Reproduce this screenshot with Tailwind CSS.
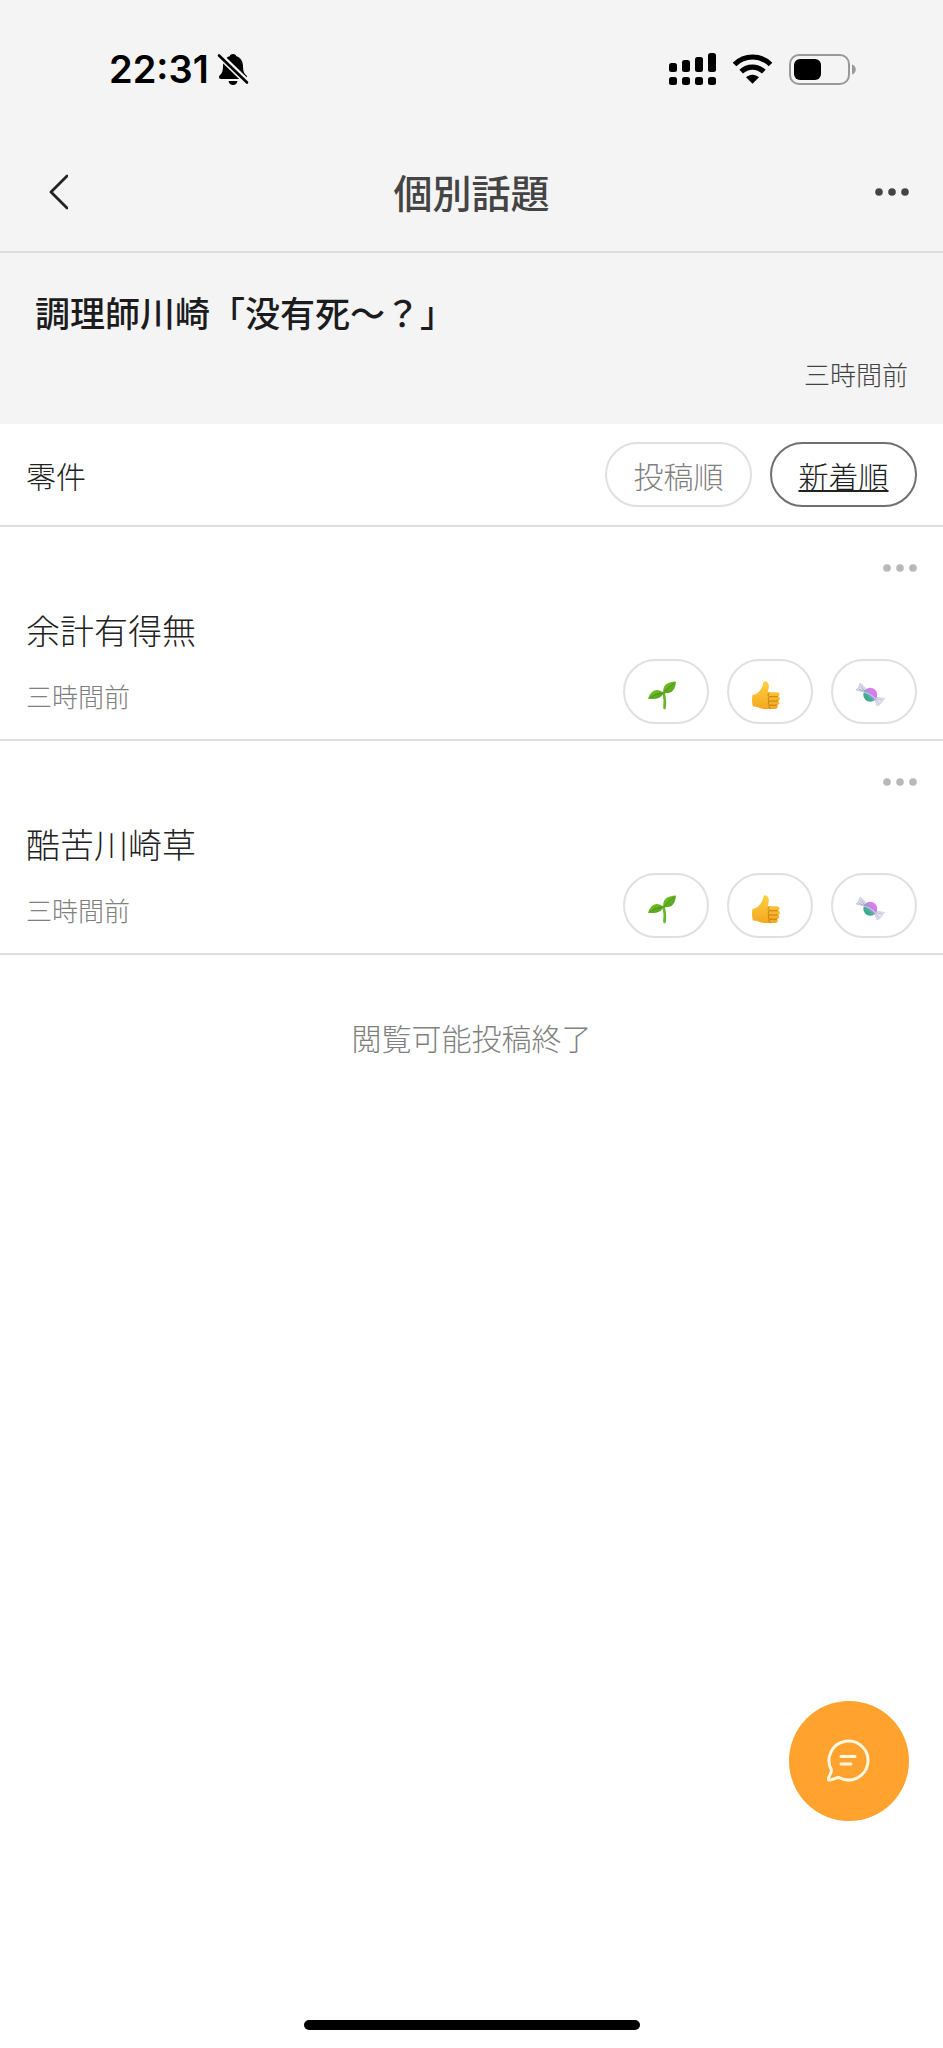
<!DOCTYPE html>
<html lang="ja">
<head>
<meta charset="utf-8">
<meta name="viewport" content="width=device-width, initial-scale=1">
<title>個別話題</title>
<script src="https://cdn.jsdelivr.net/npm/@tailwindcss/browser@4"></script>
</head>
<body class="relative flex min-h-screen flex-col bg-white font-['Noto_Sans_CJK_JP',sans-serif] font-light text-[#222]">
<svg class="absolute size-0" aria-hidden="true">
  <defs>
    <linearGradient id="leaf" x1="0" y1="0" x2="1" y2="1"><stop offset="0" stop-color="#7fc62b"/><stop offset="1" stop-color="#4c9a1c"/></linearGradient>
    <linearGradient id="hand" x1="0" y1="0" x2="0" y2="1"><stop offset="0" stop-color="#ffd043"/><stop offset="1" stop-color="#f3a81f"/></linearGradient>
    <linearGradient id="ball" x1="1" y1="0" x2="0" y2="1"><stop offset="0.2" stop-color="#e27cf0"/><stop offset="0.5" stop-color="#b48bdc"/><stop offset="0.62" stop-color="#46b29a"/><stop offset="1" stop-color="#2a9a78"/></linearGradient>
    <symbol id="seedling" viewBox="0 0 30 30">
      <path d="M16.500 12.500C18 18 18.500 22 17.500 28" fill="none" stroke="#6bb52a" stroke-width="2.600" stroke-linecap="round"/>
      <path d="M16.500 13C15 5 20 2 29 1.500C28.500 9.500 24.500 14.500 16.500 13Z" fill="url(#leaf)"/>
      <path d="M16.500 13C11 8 4 9 1 19C9 19.500 14 18.500 16.500 13Z" fill="url(#leaf)"/>
      <path d="M17 12.500C20 9 23 6 27 3.500M16 13.500C12 13 7 15 3 18" fill="none" stroke="#3f8a18" stroke-width=".8"/>
    </symbol>
    <symbol id="thumb" viewBox="0 0 30 30">
      <path d="M1.500 15C5 14.500 8 12.500 10 9C11.500 6.500 12 4.500 12.500 2.500C13 .5 16.500 .8 17.500 4C18.300 7 17.500 9.500 16.800 12.200H26C29 12.200 29.300 16 27 16.600C29.500 17.200 29.300 20.600 27 21C29 21.800 28.500 24.800 26.300 25.200C27.300 26.500 26.500 29 24 29H14C9 29 6.500 26.500 2 26.500C.8 23 .8 18 1.500 15Z" fill="url(#hand)"/>
      <path d="M26.800 16.700H18.500M26.800 21H18.300M26 25.200H18.500M18.500 12.600C16.500 13.500 16.800 16 18.500 16.700C16.800 17.800 16.800 20 18.300 21C17 22 17 24.300 18.500 25.200C17.500 26.500 18 28.500 19.500 28.800" fill="none" stroke="#c87a12" stroke-width="1"/>
    </symbol>
    <symbol id="candy" viewBox="0 0 30 30">
      <path d="M10 12L1 10L3.500 7.500L5 3.500L8 5.500L11.500 10Z" fill="#d9dbea" stroke="#b5b7cc" stroke-width=".6"/>
      <path d="M4 9.500L10 11.500M6 6.500L10 11" stroke="#9fa1bb" stroke-width=".8"/>
      <path d="M19.500 19.500L22 26L25 24.500L26.500 22.500L29.500 18.500L21 17Z" fill="#e4e2f0" stroke="#c5c3d8" stroke-width=".6"/>
      <path d="M20.500 18.500L27 20M20.500 18.500L24 24" stroke="#bbb6d0" stroke-width=".8"/>
      <circle cx="15.300" cy="14.700" r="7" fill="url(#ball)"/>
      <path d="M9 12C13 13 17 15 20.500 19" fill="none" stroke="#c9c5ee" stroke-width="1.200"/>
    </symbol>
    <symbol id="dots" viewBox="0 0 34 8">
      <circle cx="4" cy="4" r="3.800"/><circle cx="17" cy="4" r="3.800"/><circle cx="30" cy="4" r="3.800"/>
    </symbol>
  </defs>
</svg>

<div class="flex h-[138px] items-center justify-between bg-[#f4f4f4] pr-[86px] pl-[109px] font-['Inter',sans-serif]">
  <div class="flex items-center gap-2">
    <time class="text-[38px] leading-none font-semibold text-black">22:31</time>
    <svg class="h-8 w-8" viewBox="0 0 32 32" role="img" aria-label="消音">
      <path d="M16 1C17.800 1 19 2 19.300 3.200C24 4.500 26 8.500 26 13.500C26 18 27 20.500 29.500 22.500C30.500 24 30 26 28 26H4C2 26 1.500 24 2.500 22.500C5 20.500 6 18 6 13.500C6 8.500 8 4.500 12.700 3.200C13 2 14.200 1 16 1Z"/>
      <path d="M11.500 28H20.500C20 30.500 18.500 32 16 32S12 30.500 11.500 28Z"/>
      <path d="M0 0L32 31" stroke="#f4f4f4" stroke-width="6.500"/>
      <path d="M2 2.500L30 29.500" stroke="#000" stroke-width="2.600" stroke-linecap="round"/>
    </svg>
  </div>
  <div class="flex items-center gap-4">
    <svg class="h-8 w-[47px]" viewBox="0 0 47 32" role="img" aria-label="電波">
      <rect x="0" y="10" width="8" height="9" rx="2.500"/><rect x="13" y="7" width="8" height="12" rx="2.500"/><rect x="26" y="4" width="8" height="15" rx="2.500"/><rect x="39" y="0" width="8" height="19" rx="2.500"/>
      <rect x="0" y="24" width="8" height="8" rx="2.500"/><rect x="13" y="24" width="8" height="8" rx="2.500"/><rect x="26" y="24" width="8" height="8" rx="2.500"/><rect x="39" y="24" width="8" height="8" rx="2.500"/>
    </svg>
    <svg class="h-[30px] w-[41px]" viewBox="0 0 41 30" role="img" aria-label="無線">
      <path d="M2.500 10.500C12.500 .5 28.500 .5 38.500 10.500" fill="none" stroke="#000" stroke-width="5.200"/>
      <path d="M9.200 17.700C15.500 11.500 25.500 11.500 31.800 17.700" fill="none" stroke="#000" stroke-width="5.200"/>
      <path d="M14 23.200C17.800 19.800 23.200 19.800 27 23.200L20.500 29.800Z"/>
    </svg>
    <svg class="h-[31px] w-[68px]" viewBox="0 0 68 31" role="img" aria-label="電池">
      <rect x="1" y="1" width="59" height="29" rx="9" fill="none" stroke="#999" stroke-width="2"/>
      <rect x="5" y="5" width="27" height="21" rx="6"/>
      <path d="M63 10.500C68 12 68 19 63 20.500Z" fill="#999"/>
    </svg>
  </div>
</div>

<header class="grid h-[115px] grid-cols-[1fr_auto_1fr] items-center border-b-2 border-[#dedede] bg-[#f4f4f4] px-7 pb-1.5">
  <button type="button" aria-label="戻る" class="flex h-16 w-16 items-center justify-start pl-5">
    <svg class="h-9 w-5" viewBox="0 0 20 36" fill="none" stroke="#222" stroke-width="2.800" stroke-linecap="round" stroke-linejoin="round"><path d="M19 2L3 18L19 34"/></svg>
  </button>
  <h1 class="text-[39px] leading-none font-medium text-[#444]">個別話題</h1>
  <button type="button" aria-label="話題操作" class="flex h-16 w-16 items-center justify-end justify-self-end pr-1.5">
    <svg class="h-2 w-[34px]" fill="#444"><use href="#dots"/></svg>
  </button>
</header>

<section class="flex flex-col gap-6 bg-[#f4f4f4] px-[35px] pt-[37px] pb-[34px]">
  <h2 class="text-[35px] leading-11 font-medium text-[#1c1c1e]">調理師川崎「没有死～？」</h2>
  <time class="self-end text-[26px] leading-8 text-[#444]">三時間前</time>
</section>

<main class="flex-1">
  <div class="flex items-center justify-between border-b-2 border-[#dedede] px-[26px] pt-[18px] pb-[18px]">
    <h3 class="text-[30px] leading-none">零件</h3>
    <div class="flex gap-[18px]">
      <button type="button" class="h-[65px] w-[147px] rounded-full border-2 border-[#e0e0e0] text-[30px] leading-none text-[#808080]">投稿順</button>
      <button type="button" aria-pressed="true" class="h-[65px] w-[147px] rounded-full border-2 border-[#707070] text-[30px] leading-none underline decoration-2 underline-offset-2">新着順</button>
    </div>
  </div>

  <article class="flex h-[214px] flex-col border-b-2 border-[#dedede] px-[26px] pb-[15px]">
    <div class="flex h-[86px] items-center justify-end"><button type="button" aria-label="投稿操作" class="-mr-2 p-2"><svg class="h-2 w-[34px]" fill="#b8b8b8"><use href="#dots"/></svg></button></div>
    <div class="flex flex-1 items-end justify-between">
      <div class="flex flex-col gap-7 pb-3">
        <p class="text-[34px] leading-11">余計有得無</p>
        <time class="text-[26px] leading-8 text-[#808080]">三時間前</time>
      </div>
      <div class="flex gap-[18px]">
        <button type="button" aria-label="芽" class="flex h-[65px] w-[86px] items-center justify-center rounded-full border-2 border-[#e0e0e0] pt-1.5 pr-2"><svg class="size-[30px]"><use href="#seedling"/></svg></button>
        <button type="button" aria-label="賛成" class="flex h-[65px] w-[86px] items-center justify-center rounded-full border-2 border-[#e0e0e0] pt-1.5 pr-2"><svg class="size-[30px]"><use href="#thumb"/></svg></button>
        <button type="button" aria-label="飴" class="flex h-[65px] w-[86px] items-center justify-center rounded-full border-2 border-[#e0e0e0] pt-1.5 pr-2"><svg class="size-[30px]"><use href="#candy"/></svg></button>
      </div>
    </div>
  </article>

  <article class="flex h-[214px] flex-col border-b-2 border-[#dedede] px-[26px] pb-[15px]">
    <div class="flex h-[86px] items-center justify-end"><button type="button" aria-label="投稿操作" class="-mr-2 p-2"><svg class="h-2 w-[34px]" fill="#b8b8b8"><use href="#dots"/></svg></button></div>
    <div class="flex flex-1 items-end justify-between">
      <div class="flex flex-col gap-7 pb-3">
        <p class="text-[34px] leading-11">酷苦川崎草</p>
        <time class="text-[26px] leading-8 text-[#808080]">三時間前</time>
      </div>
      <div class="flex gap-[18px]">
        <button type="button" aria-label="芽" class="flex h-[65px] w-[86px] items-center justify-center rounded-full border-2 border-[#e0e0e0] pt-1.5 pr-2"><svg class="size-[30px]"><use href="#seedling"/></svg></button>
        <button type="button" aria-label="賛成" class="flex h-[65px] w-[86px] items-center justify-center rounded-full border-2 border-[#e0e0e0] pt-1.5 pr-2"><svg class="size-[30px]"><use href="#thumb"/></svg></button>
        <button type="button" aria-label="飴" class="flex h-[65px] w-[86px] items-center justify-center rounded-full border-2 border-[#e0e0e0] pt-1.5 pr-2"><svg class="size-[30px]"><use href="#candy"/></svg></button>
      </div>
    </div>
  </article>

  <p class="pt-[62px] text-center text-[30px] leading-10 text-[#808080]">閲覧可能投稿終了</p>
</main>

<button type="button" aria-label="投稿" class="fixed right-[34px] bottom-[227px] flex size-[120px] items-center justify-center rounded-full bg-[#ffa22e]">
  <svg class="size-11" viewBox="1 1 44 44" fill="none" stroke="#fff7e0" stroke-width="3" stroke-linecap="round" stroke-linejoin="round">
    <path d="M5.500 32A19.500 19.500 0 1 1 13 39.500C9.500 39.500 6 42.500 2.500 42C1.500 39 5.500 36 5.500 32Z"/>
    <path d="M15 18.500H29M15 26H25"/>
  </svg>
</button>
<div class="mb-[18px] h-2.5 w-[336px] self-center rounded-full bg-black"></div>
</body>
</html>
